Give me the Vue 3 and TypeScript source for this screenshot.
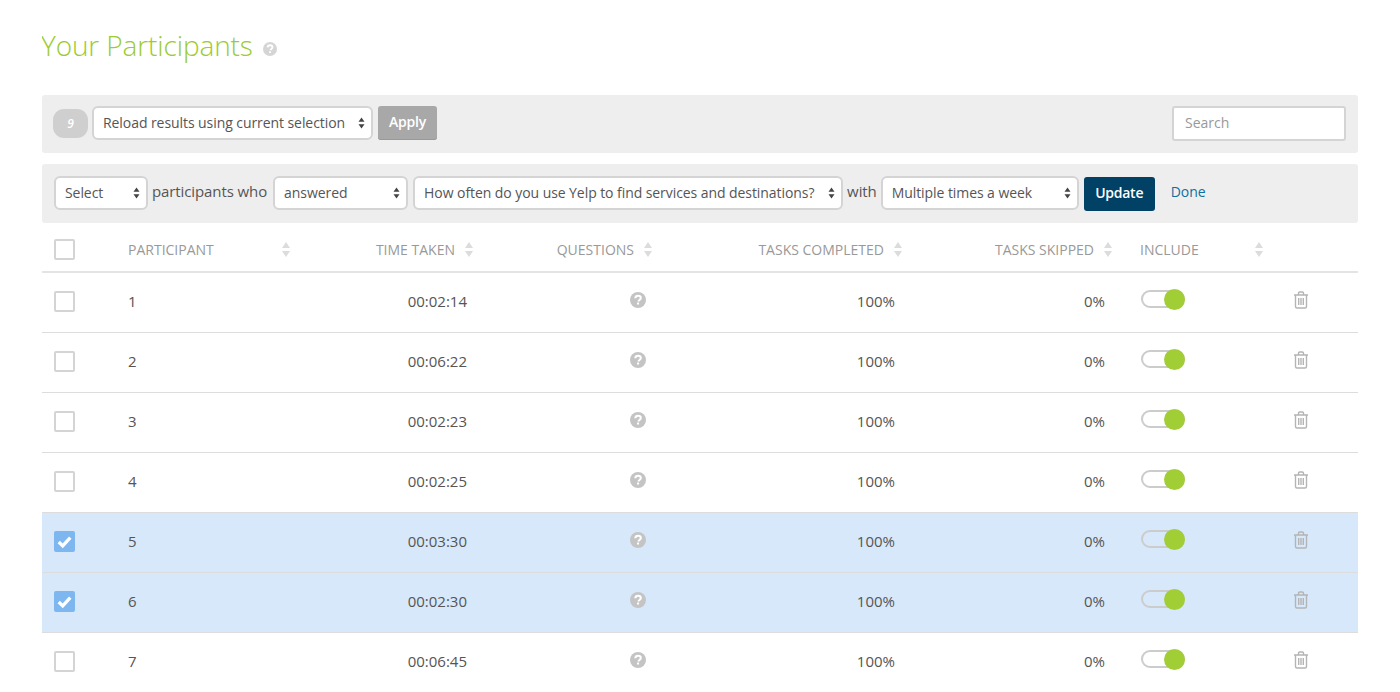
<script setup lang="ts">
interface Row { id: number; time: string; selected: boolean }
const rows: Row[] = [
  { id: 1, time: '00:02:14', selected: false },
  { id: 2, time: '00:06:22', selected: false },
  { id: 3, time: '00:02:23', selected: false },
  { id: 4, time: '00:02:25', selected: false },
  { id: 5, time: '00:03:30', selected: true },
  { id: 6, time: '00:02:30', selected: true },
  { id: 7, time: '00:06:45', selected: false },
]
</script>

<template>
  <div class="page">
    <h1 class="title">
      Your Participants
      <svg class="help title-help" viewBox="0 0 16 16"><circle cx="8" cy="8" r="8" /><path d="M5.3 6.200C5.400 4.600 6.500 3.700 8.100 3.700c1.600 0 2.700.9 2.700 2.200 0 1-.5 1.500-1.300 2.100-.7.5-.9.8-.9 1.500" class="q" /><rect x="7" y="10.600" width="2.100" height="2" rx=".3" class="dot" /></svg>
    </h1>

    <div class="bar bar-top">
      <span class="badge">9</span>
      <div class="select w-reload">
        <span>Reload results using current selection</span>
        <svg class="arrows" viewBox="0 0 7 12"><path d="M3.500 0.500 6.500 4.800H.5zM3.500 11.500.5 7.200H6.500z" /></svg>
      </div>
      <button class="btn btn-apply">Apply</button>
      <div class="search"><span>Search</span></div>
    </div>

    <div class="bar bar-filter">
      <div class="select w-select">
        <span>Select</span>
        <svg class="arrows" viewBox="0 0 7 12"><path d="M3.500 0.500 6.500 4.800H.5zM3.500 11.500.5 7.200H6.500z" /></svg>
      </div>
      <span class="label label-who">participants who</span>
      <div class="select w-answered">
        <span>answered</span>
        <svg class="arrows" viewBox="0 0 7 12"><path d="M3.500 0.500 6.500 4.800H.5zM3.500 11.500.5 7.200H6.500z" /></svg>
      </div>
      <div class="select w-question">
        <span>How often do you use Yelp to find services and destinations?</span>
        <svg class="arrows" viewBox="0 0 7 12"><path d="M3.500 0.500 6.500 4.800H.5zM3.500 11.500.5 7.200H6.500z" /></svg>
      </div>
      <span class="label">with</span>
      <div class="select w-multiple">
        <span>Multiple times a week</span>
        <svg class="arrows" viewBox="0 0 7 12"><path d="M3.500 0.500 6.500 4.800H.5zM3.500 11.500.5 7.200H6.500z" /></svg>
      </div>
      <button class="btn btn-update">Update</button>
      <a class="done">Done</a>
    </div>

    <div class="grid head">
      <div class="cell-check"><span class="check"></span></div>
      <div class="th between">PARTICIPANT<svg class="sort" viewBox="0 0 8 15"><path d="M4 0 8 6H0zM4 15 0 9H8z" /></svg></div>
      <div class="th end">TIME TAKEN<svg class="sort" viewBox="0 0 8 15"><path d="M4 0 8 6H0zM4 15 0 9H8z" /></svg></div>
      <div class="th end">QUESTIONS<svg class="sort" viewBox="0 0 8 15"><path d="M4 0 8 6H0zM4 15 0 9H8z" /></svg></div>
      <div class="th end">TASKS COMPLETED<svg class="sort" viewBox="0 0 8 15"><path d="M4 0 8 6H0zM4 15 0 9H8z" /></svg></div>
      <div class="th end">TASKS SKIPPED<svg class="sort" viewBox="0 0 8 15"><path d="M4 0 8 6H0zM4 15 0 9H8z" /></svg></div>
      <div class="th between th-include">INCLUDE<svg class="sort" viewBox="0 0 8 15"><path d="M4 0 8 6H0zM4 15 0 9H8z" /></svg></div>
      <div></div>
    </div>

    <div v-for="row in rows" :key="row.id" class="grid row" :class="{ selected: row.selected }">
      <div class="cell-check">
        <span class="check" :class="{ checked: row.selected }">
          <svg v-if="row.selected" viewBox="0 0 20 20"><path d="M4.500 10.500 8.300 14.200 15.500 6.300" /></svg>
        </span>
      </div>
      <div class="td">{{ row.id }}</div>
      <div class="td right">{{ row.time }}</div>
      <div class="td q-cell">
        <svg class="help row-help" viewBox="0 0 16 16"><circle cx="8" cy="8" r="8" /><path d="M5.300 6.200C5.400 4.600 6.500 3.700 8.100 3.700c1.600 0 2.700.9 2.700 2.200 0 1-.5 1.500-1.300 2.100-.7.5-.9.8-.9 1.500" class="q" /><rect x="7" y="10.600" width="2.100" height="2" rx=".3" class="dot" /></svg>
      </div>
      <div class="td right r2">100%</div>
      <div class="td right r2">0%</div>
      <div class="td include">
        <span class="toggle"><span class="knob"></span></span>
      </div>
      <div class="td trash-cell">
        <svg class="trash" viewBox="0 0 16 18"><path d="M1 4H15M5.500 4V2.300C5.500 1.500 6 1 6.800 1H9.200C10 1 10.500 1.500 10.500 2.300V4M2.500 4V15.500C2.500 16.400 3.100 17 4 17H12C12.900 17 13.500 16.400 13.500 15.500V4M5.700 7V14M8 7V14M10.300 7V14" /></svg>
      </div>
    </div>
  </div>
</template>

<style>
html, body { margin: 0; background: #fff; overflow: hidden; }
</style>

<style scoped>
.page {
  width: 1316px;
  height: 692px;
  margin-left: 42px;
  font-family: "Open Sans", sans-serif;
  font-size: 14px;
  color: #555;
  overflow: hidden;
}
.title {
  margin: 0 0 0 -1px;
  height: 95px;
  padding: 26px 0 31px;
  box-sizing: border-box;
  font-size: 28px;
  line-height: 38px;
  font-weight: 300;
  letter-spacing: -0.12px;
  color: #9bcb30;
  display: flex;
  align-items: center;
}
.help { fill: #c4c4c4; display: block; flex: none; }
.help .q { fill: none; stroke: #fff; stroke-width: 2.100; }
.help .dot { fill: #fff; }
.title-help { width: 14px; height: 14px; margin: 8px 0 0 10px; fill: #d5d5d5; }
.row-help { width: 16px; height: 16px; }
.bar {
  background: #eee;
  border-radius: 3px;
  display: flex;
  align-items: flex-start;
  box-sizing: border-box;
  padding-left: 12px;
}
.bar-top { height: 58px; margin-bottom: 11px; padding-top: 11px; }
.bar-filter { height: 59px; padding-top: 12px; }
.badge {
  width: 35px;
  height: 29px;
  border-radius: 11px;
  background: #cfcfcf;
  color: #fff;
  font-style: italic;
  font-weight: 600;
  font-size: 12px;
  display: flex;
  align-items: center;
  justify-content: center;
  margin: 3px 4px 0 -1px;
}
.select {
  height: 34px;
  box-sizing: border-box;
  border: 2px solid #d4d4d4;
  border-radius: 6px;
  background: #fff;
  display: flex;
  align-items: center;
  justify-content: space-between;
  padding: 0 6px 0 8px;
  color: #555;
  white-space: nowrap;
  letter-spacing: -0.07px;
}
.select span { margin: -2px 0 0 1px; }
.arrows { width: 7px; height: 12px; fill: #444; flex: none; }
.w-reload { width: 281px; margin-right: 5px; }
.w-select { width: 94px; }
.w-answered { width: 135px; margin-right: 5px; }
.w-question { width: 430px; }
.w-multiple { width: 198px; margin-right: 5px; }
.label {
  margin: 0 4px 0 4px;
  line-height: 30px;
  white-space: nowrap;
  font-size: 15px;
  letter-spacing: -0.1px;
}
.label-who { margin-right: 6px; }
.btn {
  height: 34px;
  border: 0;
  border-radius: 3px;
  color: #fff;
  font-family: inherit;
  font-size: 14px;
  font-weight: 600;
  letter-spacing: -0.25px;
  padding: 0 0 4px;
}
.btn-apply { width: 59px; background: #a8a8a8; box-shadow: inset 0 -1px 0 #999; }
.btn-update { width: 71px; background: #004165; margin-top: 1px; }
.done { margin: 6px 0 0 16px; color: #0f6f9f; font-weight: 500; }
.search {
  margin-left: auto;
  margin-right: 12px;
  width: 174px;
  height: 35px;
  box-sizing: border-box;
  border: 2px solid #d4d4d4;
  border-radius: 3px;
  background: #fff;
  color: #999;
  display: flex;
  align-items: center;
  padding-left: 11px;
}
.search span { margin-top: -3px; }
.grid {
  display: grid;
  grid-template-columns: 86px 162px 183px 179px 250px 210px 151px 95px;
  border-bottom: 2px solid #e4e4e4;
  box-sizing: border-box;
  align-items: center;
}
.head { height: 50px; padding-top: 5px; }
.row { height: 60px; border-bottom-width: 1px; border-bottom-color: #ddd; }
.row .cell-check { margin-top: -3px; }
.selected { background: #d7e8fb; }
.cell-check { padding-left: 12px; display: flex; }
.check {
  width: 21px;
  height: 21px;
  box-sizing: border-box;
  border: 2px solid #d4d4d4;
  border-radius: 2px;
  background: #fff;
  display: block;
}
.check.checked { background: #7eb6ef; border: 0; }
.check svg { width: 21px; height: 21px; display: block; fill: none; stroke: #fff; stroke-width: 3.200; }
.th {
  display: flex;
  align-items: center;
  color: #999;
  gap: 10px;
  white-space: nowrap;
}
.end { justify-content: flex-end; }
.between { justify-content: space-between; }
.th-include { padding-left: 28px; }
.sort { width: 8px; height: 15px; fill: #dcdcdc; flex: none; }
.td { white-space: nowrap; font-size: 15px; margin-top: -3px; }
.right { text-align: right; padding-right: 6px; }
.r2 { padding-right: 7px; }
.q-cell { display: flex; justify-content: flex-end; padding-right: 6px; margin-top: -5px; }
.include { padding-left: 29px; margin-top: -7px; }
.toggle {
  display: block;
  position: relative;
  width: 44px;
  height: 18px;
  box-sizing: border-box;
  border: 2px solid #ccc;
  border-radius: 9px;
}
.knob {
  position: absolute;
  right: -2px;
  top: -3.500px;
  width: 21px;
  height: 21px;
  border-radius: 50%;
  background: #a2ce35;
}
.trash-cell { display: flex; padding-left: 30px; margin-top: -5px; }
.trash { width: 16px; height: 18px; fill: none; stroke: #b4b4b4; stroke-width: 1.400; }
</style>
